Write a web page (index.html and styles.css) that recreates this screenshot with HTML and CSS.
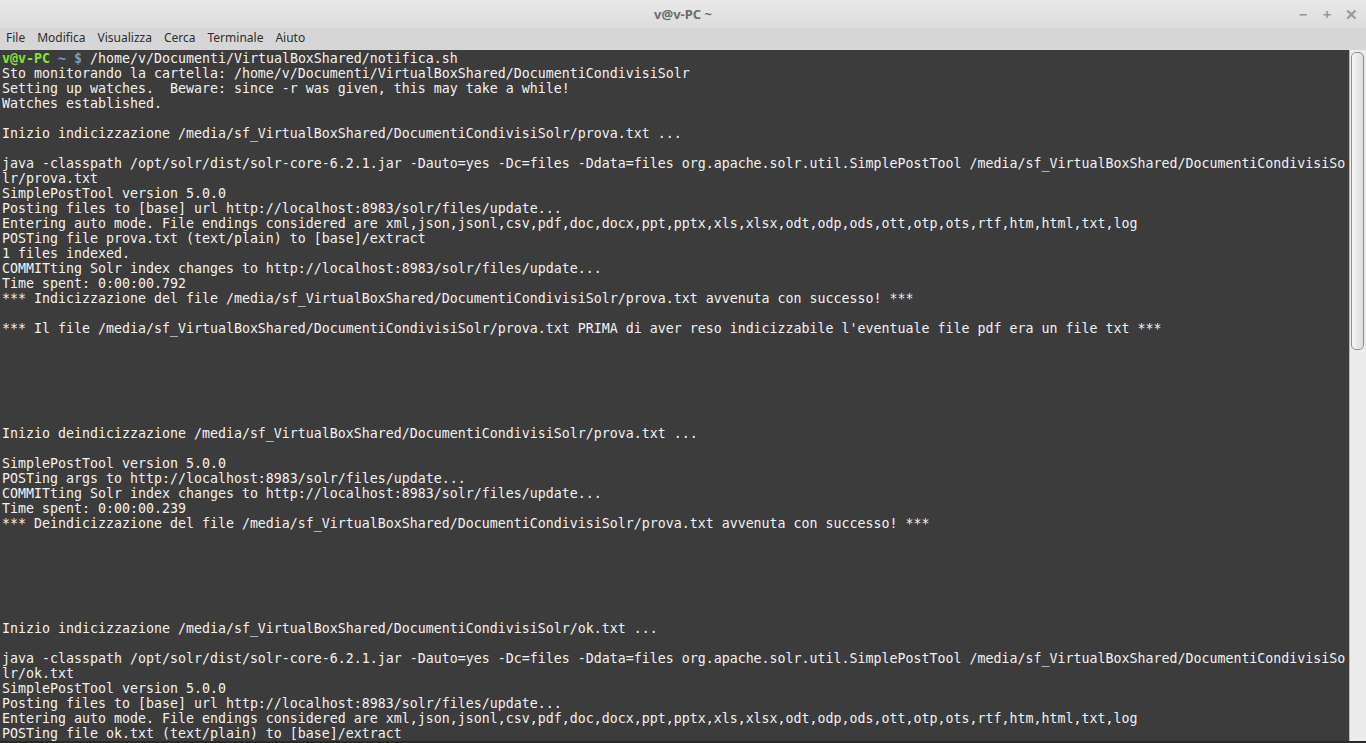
FILE: index.html
```html
<!DOCTYPE html>
<html lang="it">
<head>
    <meta charset="UTF-8">
    <meta name="viewport" content="width=device-width, initial-scale=1.0">
    <title>v@v-PC ~</title>
    <link rel="stylesheet" href="styles.css">
</head>
<body>
    <header class="titlebar">
        <span class="title">v@v-PC ~</span>
        <div class="controls">
            <span class="ctl">&minus;</span>
            <span class="ctl">+</span>
            <span class="ctl">&#x2715;</span>
        </div>
    </header>

    <nav class="menubar">
        <span class="menu-item">File</span>
        <span class="menu-item">Modifica</span>
        <span class="menu-item">Visualizza</span>
        <span class="menu-item">Cerca</span>
        <span class="menu-item">Terminale</span>
        <span class="menu-item">Aiuto</span>
    </nav>

    <main class="terminal-wrap">
        <pre class="terminal"><span class="p-user">v@v-PC</span> <span class="p-path">~ $</span> /home/v/Documenti/VirtualBoxShared/notifica.sh
Sto monitorando la cartella: /home/v/Documenti/VirtualBoxShared/DocumentiCondivisiSolr
Setting up watches.  Beware: since -r was given, this may take a while!
Watches established.

Inizio indicizzazione /media/sf_VirtualBoxShared/DocumentiCondivisiSolr/prova.txt ...

java -classpath /opt/solr/dist/solr-core-6.2.1.jar -Dauto=yes -Dc=files -Ddata=files org.apache.solr.util.SimplePostTool /media/sf_VirtualBoxShared/DocumentiCondivisiSo
lr/prova.txt
SimplePostTool version 5.0.0
Posting files to [base] url http://localhost:8983/solr/files/update...
Entering auto mode. File endings considered are xml,json,jsonl,csv,pdf,doc,docx,ppt,pptx,xls,xlsx,odt,odp,ods,ott,otp,ots,rtf,htm,html,txt,log
POSTing file prova.txt (text/plain) to [base]/extract
1 files indexed.
COMMITting Solr index changes to http://localhost:8983/solr/files/update...
Time spent: 0:00:00.792
*** Indicizzazione del file /media/sf_VirtualBoxShared/DocumentiCondivisiSolr/prova.txt avvenuta con successo! ***

*** Il file /media/sf_VirtualBoxShared/DocumentiCondivisiSolr/prova.txt PRIMA di aver reso indicizzabile l'eventuale file pdf era un file txt ***






Inizio deindicizzazione /media/sf_VirtualBoxShared/DocumentiCondivisiSolr/prova.txt ...

SimplePostTool version 5.0.0
POSTing args to http://localhost:8983/solr/files/update...
COMMITting Solr index changes to http://localhost:8983/solr/files/update...
Time spent: 0:00:00.239
*** Deindicizzazione del file /media/sf_VirtualBoxShared/DocumentiCondivisiSolr/prova.txt avvenuta con successo! ***






Inizio indicizzazione /media/sf_VirtualBoxShared/DocumentiCondivisiSolr/ok.txt ...

java -classpath /opt/solr/dist/solr-core-6.2.1.jar -Dauto=yes -Dc=files -Ddata=files org.apache.solr.util.SimplePostTool /media/sf_VirtualBoxShared/DocumentiCondivisiSo
lr/ok.txt
SimplePostTool version 5.0.0
Posting files to [base] url http://localhost:8983/solr/files/update...
Entering auto mode. File endings considered are xml,json,jsonl,csv,pdf,doc,docx,ppt,pptx,xls,xlsx,odt,odp,ods,ott,otp,ots,rtf,htm,html,txt,log
POSTing file ok.txt (text/plain) to [base]/extract</pre>
        <div class="scrollbar">
            <div class="thumb"></div>
        </div>
    </main>
</body>
</html>
```

FILE: styles.css
```css
html, body {
    margin: 0;
    padding: 0;
    height: 100%;
    overflow: hidden;
}

body {
    display: flex;
    flex-direction: column;
    background-color: #d6d6d6;
    font-family: 'Noto Sans', 'Open Sans', sans-serif;
}

.titlebar {
    height: 28px;
    flex: none;
    display: flex;
    align-items: center;
    justify-content: center;
    position: relative;
    background: linear-gradient(#e9e9e9, #dcdcdc);
}

.title {
    font-size: 13px;
    font-weight: bold;
    color: #6b6b6b;
}

.controls {
    position: absolute;
    top: 0;
    right: 8px;
    height: 28px;
    display: flex;
    align-items: center;
    gap: 10px;
}

.ctl {
    width: 14px;
    text-align: center;
    font-size: 15px;
    font-weight: bold;
    color: #9a9a9a;
}

.menubar {
    height: 22px;
    flex: none;
    display: flex;
    align-items: center;
    background-color: #d6d6d6;
    padding: 0 0 3px 0;
    box-sizing: border-box;
}

.menu-item {
    font-size: 12px;
    color: #2e2e2e;
    padding: 0 6px;
}

.terminal-wrap {
    flex: 1;
    display: flex;
    min-height: 0;
    border-bottom: 2px solid #2a2a2a;
}

.terminal {
    flex: 1;
    margin: 0;
    padding: 1px 0 0 2px;
    background-color: #3c3c3c;
    color: #f2f2f2;
    font-family: 'DejaVu Sans Mono', monospace;
    font-size: 13.29px;
    line-height: 15px;
    overflow: hidden;
    white-space: pre;
}

.p-user {
    color: #8ae234;
    font-weight: bold;
}

.p-path {
    color: #729fcf;
    font-weight: bold;
}

.scrollbar {
    width: 13px;
    flex: none;
    background-color: #ececec;
    border-left: 1px solid #b8b8b8;
    padding: 2px 2px 0 1px;
}

.thumb {
    height: 296px;
    border: 1px solid #8f8f8f;
    border-radius: 5px;
    background: linear-gradient(90deg, #f6f6f6, #dcdcdc);
}
```
